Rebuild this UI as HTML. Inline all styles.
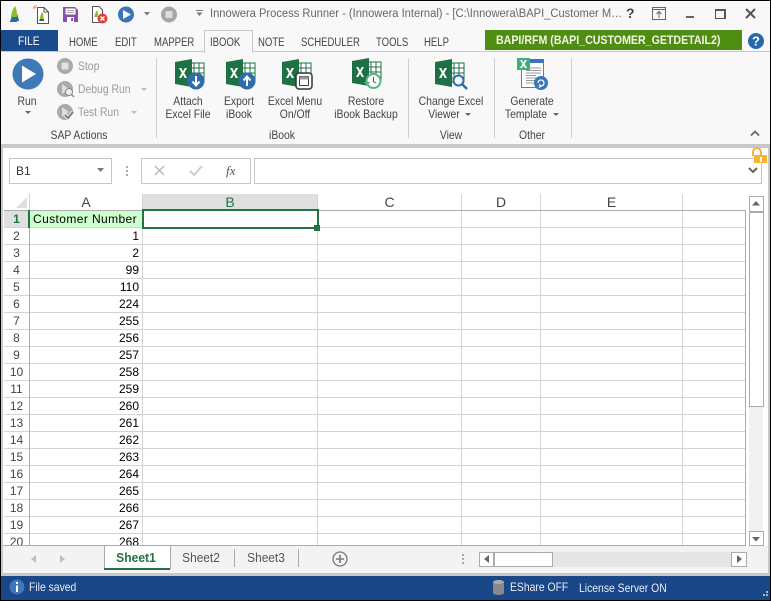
<!DOCTYPE html>
<html><head><meta charset="utf-8"><style>
html,body{margin:0;padding:0;background:#fff}
#p{position:relative;width:771px;height:601px;overflow:hidden;background:#f8f8f8;font-family:"Liberation Sans",sans-serif;font-size:12px;color:#444}
#p div,#p svg{position:absolute}
.t{white-space:nowrap;line-height:14px}
.n{transform:scaleX(.865);transform-origin:0 50%}
.c{white-space:nowrap;line-height:14px;text-align:center;width:120px;transform:scaleX(.865)}
.tab{white-space:nowrap;line-height:14px;top:36px;color:#444;font-size:11.5px;transform:scaleX(.83);transform-origin:0 50%}
.s{width:1px;background:#d0d0d0;top:58px;height:80px}
.r{left:4px;width:25px;height:16px;text-align:center;line-height:17px;color:#444}
.v{left:30px;width:109px;height:16px;text-align:right;line-height:17px;color:#000}
.h{top:194px;height:16px;text-align:center;font-size:14px;line-height:16px;color:#444}
.g{width:1px;background:#d4d4d4}
.d{color:#999}
</style></head><body><div id="p">
<svg width="0" height="0" style="left:0;top:0"><defs>
<symbol id="xl" viewBox="0 0 30 28"><rect x="15" y="4" width="14" height="19" fill="#fff" stroke="#1e7145"/><path d="M19 4V23M24 4V23M15 9H29M15 14H29M15 19H29" stroke="#1e7145" fill="none"/><path d="M0 3L17 0V28L0 25Z" fill="#1e7145"/><path d="M4 9L6.2 9 8 12.2 9.8 9H12L9.2 14 12 19H9.8L8 15.8 6.2 19H4L6.8 14Z" fill="#fff"/></symbol>
</defs></svg>

<!-- title bar -->
<div style="left:0;top:0;width:771px;height:30px;background:#f8f8f8"></div>
<svg style="left:8px;top:4px" width="16" height="20" viewBox="0 0 16 20"><path d="M7 2C9 5 9 10 9 14L3 14C3 9 5 5 7 2Z" fill="#8dbb2c"/><path d="M9 9L11 17H8L9 12Z" fill="#2a5a9a"/><path d="M2 17L4 13 9 13 9 18 2 18Z" fill="#1f6fa8"/></svg>
<svg style="left:33px;top:4px" width="18" height="20" viewBox="0 0 18 20"><path d="M4.500 3.500H11L15.500 8V19.500H4.500Z" fill="#fff" stroke="#555"/><path d="M11 3.500V8H15.500" fill="none" stroke="#555"/><path d="M9 8C10.500 10 10.500 13 10.500 15H7C7 12 8 10 9 8Z" fill="#8dbb2c"/><path d="M6.500 15H11V17H6.500Z" fill="#2a5a9a"/><path d="M1 2L3 4M3 1V2M0 4H2" stroke="#e8833a"/></svg>
<svg style="left:62px;top:6px" width="17" height="17" viewBox="0 0 17 17"><path d="M1 1H13L16 4V16H1Z" fill="#8a4fa8"/><rect x="3.500" y="2.500" width="10" height="6" fill="#fff"/><path d="M5 4.500H12M5 6.500H12" stroke="#aaa"/><rect x="5" y="11" width="7" height="5" fill="#fff"/><rect x="9" y="12" width="2" height="3" fill="#8a4fa8"/></svg>
<svg style="left:90px;top:5px" width="18" height="19" viewBox="0 0 18 19"><path d="M2.500 1.500H9L12.500 5V17.500H2.500Z" fill="#fff" stroke="#555"/><path d="M7 5C8 7 8 10 8 12H4.500C4.500 9 6 7 7 5Z" fill="#8dbb2c"/><circle cx="12.500" cy="13.500" r="5" fill="#d8413a"/><path d="M10.500 11.500L14.500 15.500M14.500 11.500L10.500 15.500" stroke="#fff" stroke-width="1.500"/></svg>
<svg style="left:117px;top:6px" width="18" height="18" viewBox="0 0 18 18"><circle cx="9" cy="8.500" r="8" fill="#3a75b5"/><path d="M6 4L14 8.500 6 13Z" fill="#fff"/></svg>
<svg style="left:144px;top:12px" width="6" height="4"><path d="M0 0H6L3 3.500Z" fill="#777"/></svg>
<svg style="left:160px;top:6px" width="18" height="18" viewBox="0 0 18 18"><circle cx="9" cy="8.500" r="8" fill="#a6a6a6"/><rect x="5.500" y="5" width="7" height="7" rx="1" fill="#ddd"/></svg>
<svg style="left:196px;top:10px" width="7" height="7"><path d="M0.500 2.500H6.500L3.500 6Z" fill="#777"/><path d="M0 .5H7" stroke="#777"/></svg>
<div class="t" style="left:210px;top:7px;color:#666;font-size:11.5px;transform:scaleX(.97);transform-origin:0 50%">Innowera Process Runner - (Innowera Internal) - [C:\Innowera\BAPI_Customer M…</div>
<div class="t" style="left:626px;top:6px;font-size:14px;font-weight:bold;color:#444">?</div>
<svg style="left:652px;top:7px" width="15" height="14"><rect x=".5" y=".5" width="13" height="12" fill="none" stroke="#666"/><path d="M1 2.500H13M7 11V5M4.500 7L7 4.500 9.500 7" fill="none" stroke="#666"/></svg>
<div style="left:686px;top:16px;width:8px;height:2px;background:#666"></div>
<div style="left:715px;top:9px;width:8px;height:7px;border:1px solid #555;border-top-width:2px;border-right-width:2px;border-bottom-width:1px;border-left-width:1px"></div>
<svg style="left:745px;top:8px" width="12" height="12"><path d="M1 1L10 10M10 1L1 10" stroke="#555" stroke-width="2"/></svg>

<!-- tabs -->
<div style="left:1px;top:30px;width:57px;height:22px;background:#1a4b8c"></div>
<div class="t" style="left:18px;top:34px;color:#fff;transform:scaleX(.85);transform-origin:0 50%">FILE</div>
<div style="left:0;top:51px;width:771px;height:1px;background:#c8c8c8"></div>
<div style="left:204px;top:30px;width:47px;height:22px;background:#f8f8f8;border:1px solid #c8c8c8;border-bottom:none"></div>
<div class="tab" style="left:69px">HOME</div>
<div class="tab" style="left:115px">EDIT</div>
<div class="tab" style="left:154px">MAPPER</div>
<div class="tab" style="left:210px">IBOOK</div>
<div class="tab" style="left:258px">NOTE</div>
<div class="tab" style="left:301px">SCHEDULER</div>
<div class="tab" style="left:376px">TOOLS</div>
<div class="tab" style="left:424px">HELP</div>
<div style="left:485px;top:30px;width:257px;height:20px;background:#4f8e12"></div>
<div class="t" style="left:496px;top:33px;color:#f4f4e8;font-weight:bold;transform:scaleX(.885);transform-origin:0 50%">BAPI/RFM (BAPI_CUSTOMER_GETDETAIL2)</div>
<svg style="left:747px;top:32px" width="18" height="18"><circle cx="9" cy="9" r="8" fill="#2568b0"/><text x="9" y="13.500" text-anchor="middle" font-family="Liberation Sans" font-weight="bold" font-size="13" fill="#fff">?</text></svg>

<!-- ribbon -->
<svg style="left:12px;top:58px" width="32" height="32"><circle cx="16" cy="16" r="15.500" fill="#3f79b8"/><path d="M10 7.500L24 16 10 24.500Z" fill="#fff"/></svg>
<div class="c" style="left:-33px;top:94px">Run</div>
<svg style="left:25px;top:111px" width="6" height="4"><path d="M0 0H6L3 3Z" fill="#666"/></svg>
<svg style="left:57px;top:58px" width="16" height="16"><circle cx="8" cy="8" r="8" fill="#a9a9a9"/><rect x="4.500" y="4.500" width="7" height="7" rx="1" fill="#e2e2e2"/></svg>
<div class="t d n" style="left:78px;top:59px">Stop</div>
<svg style="left:57px;top:81px" width="18" height="17"><circle cx="8" cy="8" r="8" fill="#a9a9a9"/><path d="M5 3L12 8 5 13Z" fill="#ddd"/><circle cx="12" cy="11" r="3.500" fill="#eee" stroke="#888"/><path d="M14.500 13.500L17 16" stroke="#888" stroke-width="1.500"/></svg>
<div class="t d n" style="left:78px;top:82px">Debug Run</div>
<svg style="left:141px;top:88px" width="6" height="4"><path d="M0 0H6L3 3Z" fill="#bbb"/></svg>
<svg style="left:57px;top:104px" width="18" height="17"><circle cx="8" cy="8" r="8" fill="#a9a9a9"/><path d="M5 3L12 8 5 13Z" fill="#ddd"/><path d="M8 11L11 14 16 8" fill="none" stroke="#f8f8f8" stroke-width="3.500"/><path d="M8 11L11 14 16 8" fill="none" stroke="#777" stroke-width="1.800"/></svg>
<div class="t d n" style="left:78px;top:105px">Test Run</div>
<svg style="left:131px;top:111px" width="6" height="4"><path d="M0 0H6L3 3Z" fill="#bbb"/></svg>
<div class="c" style="left:19px;top:128px">SAP Actions</div>
<div class="s" style="left:156px"></div><div class="s" style="left:408px"></div><div class="s" style="left:494px"></div><div class="s" style="left:571px"></div>

<svg style="left:175px;top:59px" width="30" height="28"><use href="#xl"/></svg>
<svg style="left:187px;top:72px" width="18" height="18"><circle cx="9" cy="9" r="8.500" fill="#2e6cab"/><path d="M9 4V13M5.500 9.500L9 13.500 12.500 9.500" fill="none" stroke="#fff" stroke-width="2"/></svg>
<div class="c" style="left:128px;top:94px">Attach</div><div class="c" style="left:128px;top:107px">Excel File</div>
<svg style="left:226px;top:59px" width="30" height="28"><use href="#xl"/></svg>
<svg style="left:238px;top:72px" width="18" height="18"><circle cx="9" cy="9" r="8.500" fill="#2e6cab"/><path d="M9 14V5M5.500 8.500L9 4.500 12.500 8.500" fill="none" stroke="#fff" stroke-width="2"/></svg>
<div class="c" style="left:179px;top:94px">Export</div><div class="c" style="left:179px;top:107px">iBook</div>
<svg style="left:282px;top:59px" width="30" height="28"><use href="#xl"/></svg>
<svg style="left:295px;top:72px" width="18" height="18"><rect x="1" y="1" width="16" height="16" rx="3" fill="#fff" stroke="#333" stroke-width="1.500"/><rect x="4.500" y="4.500" width="9" height="9" fill="none" stroke="#444"/><rect x="4.500" y="4.500" width="9" height="3" fill="#999"/></svg>
<div class="c" style="left:235px;top:94px">Excel Menu</div><div class="c" style="left:235px;top:107px">On/Off</div>
<svg style="left:352px;top:58px" width="30" height="28"><use href="#xl"/></svg>
<svg style="left:364px;top:72px" width="18" height="18"><circle cx="9.500" cy="9" r="7" fill="#f8f8f8" stroke="#52b788" stroke-width="2"/><path d="M9.500 5V9.500L12 11" fill="none" stroke="#555"/><path d="M0 10H6L3 14Z" fill="#52b788"/></svg>
<div class="c" style="left:306px;top:94px">Restore</div><div class="c" style="left:306px;top:107px">iBook Backup</div>
<svg style="left:435px;top:59px" width="30" height="28"><use href="#xl"/></svg>
<svg style="left:452px;top:74px" width="16" height="16"><circle cx="6.500" cy="6.500" r="5" fill="#f8f8f8" stroke="#2e6cab" stroke-width="2"/><path d="M10 10L15 15" stroke="#2e6cab" stroke-width="2.500"/></svg>
<div class="c" style="left:391px;top:94px">Change Excel</div><div class="c" style="left:384px;top:107px">Viewer</div>
<svg style="left:465px;top:113px" width="6" height="4"><path d="M0 0H6L3 3Z" fill="#666"/></svg>
<svg style="left:516px;top:58px" width="34" height="34" viewBox="0 0 34 34"><rect x="5.500" y="1.500" width="22" height="28" fill="#fff" stroke="#777"/><rect x="14" y="1" width="14" height="4" fill="#3a75b5"/><path d="M10 10H25M10 12.500H25M10 15H25M10 17.500H20M10 20H20M10 22.500H20M10 25H20" stroke="#999"/><rect x="1" y="0" width="13" height="12" fill="#3fae7a"/><path d="M4 2H6L7.500 4.500 9 2H11L8.500 6 11 10H9L7.500 7.500 6 10H4L6.500 6Z" fill="#fff"/><circle cx="25" cy="25" r="7" fill="#3a75b5"/><path d="M22 25A3 3 0 1 1 25 28M25 28L23 26.500M25 28L23 29.500" fill="none" stroke="#fff" stroke-width="1.300"/></svg>
<div class="c" style="left:472px;top:94px">Generate</div><div class="c" style="left:466px;top:107px">Template</div>
<svg style="left:553px;top:113px" width="6" height="4"><path d="M0 0H6L3 3Z" fill="#666"/></svg>
<div class="c" style="left:222px;top:128px">iBook</div>
<div class="c" style="left:391px;top:128px">View</div>
<div class="c" style="left:472px;top:128px">Other</div>
<svg style="left:750px;top:130px" width="10" height="7"><path d="M1 5.500L5 1.500 9 5.500" fill="none" stroke="#666" stroke-width="1.800"/></svg>

<!-- content frame -->
<div style="left:0;top:144px;width:771px;height:4px;background:#c8c8c8"></div>
<div style="left:3px;top:148px;width:765px;height:425px;background:#fff"></div>
<div style="left:1px;top:148px;width:2px;height:428px;background:#c8c8c8"></div>
<div style="left:768px;top:148px;width:2px;height:428px;background:#c8c8c8"></div>

<!-- formula bar -->
<div style="left:9px;top:158px;width:101px;height:24px;border:1px solid #c6c6c6;background:#fff"></div>
<div class="t" style="left:16px;top:164px;color:#333">B1</div>
<svg style="left:97px;top:168px" width="8" height="5"><path d="M0 0H7L3.500 4Z" fill="#777"/></svg>
<div style="left:126px;top:166px;width:2px;height:2px;background:#aaa;box-shadow:0 4px 0 #aaa,0 8px 0 #aaa"></div>
<div style="left:141px;top:158px;width:108px;height:24px;border:1px solid #c6c6c6;background:#fff"></div>
<svg style="left:154px;top:165px" width="12" height="11"><path d="M1 1L10 10M10 1L1 10" stroke="#bbb" stroke-width="1.500"/></svg>
<svg style="left:189px;top:165px" width="15" height="12"><path d="M1 6L5 10 13 1" fill="none" stroke="#ccc" stroke-width="2"/></svg>
<div class="t" style="left:226px;top:164px;font-family:'Liberation Serif',serif;font-style:italic;font-size:13px;color:#555">fx</div>
<div style="left:254px;top:158px;width:506px;height:24px;border:1px solid #c6c6c6;background:#fff"></div>
<svg style="left:748px;top:167px" width="10" height="8"><path d="M1 1L5 5 9 1" fill="none" stroke="#666" stroke-width="2"/></svg>
<svg style="left:750px;top:147px" width="18" height="17"><path d="M3 9V5A4 4 0 0 1 11 5V8" fill="none" stroke="#f5b041" stroke-width="2"/><rect x="4" y="8" width="13" height="8" fill="#f9b233"/><rect x="10" y="10" width="2" height="5" fill="#fff"/></svg>

<!-- grid -->
<div style="left:0;top:0;width:746px;height:545px;overflow:hidden">
<div style="left:4px;top:211px;width:741px;height:334px;background:repeating-linear-gradient(to bottom,transparent 0,transparent 16px,#d4d4d4 16px,#d4d4d4 17px)"></div>
<div style="left:142px;top:194px;width:176px;height:16px;background:#dfdfdf"></div>
<div style="left:4px;top:211px;width:25px;height:16px;background:#dfdfdf"></div>
<div style="left:30px;top:211px;width:112px;height:16px;background:#ccffcc"></div>
<div class="g" style="left:142px;top:194px;height:351px"></div>
<div class="g" style="left:317px;top:194px;height:351px"></div>
<div class="g" style="left:461px;top:194px;height:351px"></div>
<div class="g" style="left:540px;top:194px;height:351px"></div>
<div class="g" style="left:682px;top:194px;height:351px"></div>
<div class="g" style="left:29px;top:194px;height:16px"></div>
<div style="left:29px;top:210px;width:1px;height:335px;background:#ababab"></div>
<div style="left:4px;top:210px;width:741px;height:1px;background:#ababab"></div>
<div style="left:745px;top:210px;width:1px;height:335px;background:#ababab"></div>
<svg style="left:16px;top:197px" width="11" height="11"><path d="M11 0V11H0Z" fill="#dfdfdf"/></svg>
<div class="h" style="left:30px;width:112px">A</div>
<div class="h" style="left:143px;width:174px;color:#217346">B</div>
<div class="h" style="left:318px;width:143px">C</div>
<div class="h" style="left:462px;width:78px">D</div>
<div class="h" style="left:541px;width:141px">E</div>
<div class="r" style="top:211px;color:#217346;font-weight:bold">1</div><div class="v" style="top:211px;left:33px;width:110px;text-align:left;color:#000;letter-spacing:.4px">Customer Number</div>
<div class="r" style="top:228px">2</div><div class="v" style="top:228px">1</div>
<div class="r" style="top:245px">3</div><div class="v" style="top:245px">2</div>
<div class="r" style="top:262px">4</div><div class="v" style="top:262px">99</div>
<div class="r" style="top:279px">5</div><div class="v" style="top:279px">110</div>
<div class="r" style="top:296px">6</div><div class="v" style="top:296px">224</div>
<div class="r" style="top:313px">7</div><div class="v" style="top:313px">255</div>
<div class="r" style="top:330px">8</div><div class="v" style="top:330px">256</div>
<div class="r" style="top:347px">9</div><div class="v" style="top:347px">257</div>
<div class="r" style="top:364px">10</div><div class="v" style="top:364px">258</div>
<div class="r" style="top:381px">11</div><div class="v" style="top:381px">259</div>
<div class="r" style="top:398px">12</div><div class="v" style="top:398px">260</div>
<div class="r" style="top:415px">13</div><div class="v" style="top:415px">261</div>
<div class="r" style="top:432px">14</div><div class="v" style="top:432px">262</div>
<div class="r" style="top:449px">15</div><div class="v" style="top:449px">263</div>
<div class="r" style="top:466px">16</div><div class="v" style="top:466px">264</div>
<div class="r" style="top:483px">17</div><div class="v" style="top:483px">265</div>
<div class="r" style="top:500px">18</div><div class="v" style="top:500px">266</div>
<div class="r" style="top:517px">19</div><div class="v" style="top:517px">267</div>
<div class="r" style="top:534px">20</div><div class="v" style="top:534px">268</div>
<div style="left:28px;top:210px;width:2px;height:18px;background:#217346"></div>
<div style="left:142px;top:209px;width:173px;height:16px;border:2px solid #217346"></div>
<div style="left:314px;top:225px;width:6px;height:6px;background:#217346;border:0"></div>
</div>

<!-- v scrollbar -->
<div style="left:749px;top:196px;width:14px;height:349px;background:#f0f0f0"></div>
<div style="left:749px;top:196px;width:13px;height:14px;border:1px solid #ababab;background:#fff"></div>
<svg style="left:752px;top:201px" width="8" height="5"><path d="M0 4.500H8L4 0Z" fill="#666"/></svg>
<div style="left:749px;top:212px;width:13px;height:193px;border:1px solid #ababab;background:#fff"></div>
<div style="left:749px;top:531px;width:13px;height:13px;border:1px solid #ababab;background:#fff"></div>
<svg style="left:752px;top:537px" width="8" height="5"><path d="M0 0H8L4 4.500Z" fill="#666"/></svg>

<!-- sheet tabs -->
<div style="left:3px;top:546px;width:765px;height:27px;background:#f3f3f3"></div>
<div style="left:3px;top:545px;width:743px;height:1px;background:#ababab"></div>
<div style="left:104px;top:545px;width:65px;height:23px;background:#fff;border:1px solid #ababab;border-bottom:none"></div>
<div style="left:104px;top:568px;width:66px;height:2px;background:#217346"></div>
<div class="c" style="left:76px;top:551px;color:#217346;font-weight:bold;font-size:13px;transform:scaleX(.93)">Sheet1</div>
<div class="c" style="left:141px;top:551px;color:#555;font-size:12.500px;transform:scaleX(.95)">Sheet2</div>
<div class="c" style="left:206px;top:551px;color:#555;font-size:12.500px;transform:scaleX(.95)">Sheet3</div>
<div style="left:234px;top:549px;width:1px;height:18px;background:#ababab"></div>
<div style="left:298px;top:549px;width:1px;height:18px;background:#ababab"></div>
<svg style="left:31px;top:555px" width="5" height="8"><path d="M5 0V8L0 4Z" fill="#c0c0c0"/></svg>
<svg style="left:60px;top:555px" width="5" height="8"><path d="M0 0V8L5 4Z" fill="#c0c0c0"/></svg>
<svg style="left:332px;top:551px" width="16" height="16"><circle cx="8" cy="8" r="7" fill="none" stroke="#777" stroke-width="1.300"/><path d="M8 4V12M4 8H12" stroke="#777" stroke-width="1.600"/></svg>
<div style="left:462px;top:554px;width:2px;height:2px;background:#aaa;box-shadow:0 4px 0 #aaa,0 8px 0 #aaa"></div>
<div style="left:479px;top:552px;width:267px;height:15px;background:#e6e6e6"></div>
<div style="left:479px;top:552px;width:13px;height:13px;border:1px solid #ababab;background:#fff"></div>
<svg style="left:484px;top:555px" width="5" height="8"><path d="M5 0V8L0 4Z" fill="#666"/></svg>
<div style="left:494px;top:552px;width:57px;height:13px;border:1px solid #ababab;background:#fff"></div>
<div style="left:731px;top:552px;width:14px;height:13px;border:1px solid #ababab;background:#fff"></div>
<svg style="left:737px;top:555px" width="5" height="8"><path d="M0 0V8L5 4Z" fill="#666"/></svg>

<!-- status -->
<div style="left:0;top:573px;width:771px;height:3px;background:#c8c8c8"></div>
<div style="left:1px;top:576px;width:769px;height:24px;background:#1a4788"></div>
<svg style="left:9px;top:579px" width="16" height="16"><circle cx="8" cy="8" r="7.500" fill="#3d78b8"/><rect x="7" y="3" width="2" height="2" fill="#fff"/><rect x="7" y="6.500" width="2" height="6.500" fill="#fff"/></svg>
<div class="t n" style="left:29px;top:580px;color:#e8eef6">File saved</div>
<svg style="left:493px;top:580px" width="11" height="15"><path d="M0 2V13A5.500 2 0 0 0 11 13V2Z" fill="#8a8a8a"/><ellipse cx="5.500" cy="2" rx="5.500" ry="2" fill="#aaa"/></svg>
<div class="t n" style="left:510px;top:580px;color:#e8eef6">EShare OFF</div>
<div class="t n" style="left:579px;top:581px;color:#e8eef6">License Server ON</div>
<div style="left:766px;top:591px;width:2px;height:2px;background:#9fb3cf;box-shadow:0 3px 0 #9fb3cf,-3px 3px 0 #9fb3cf"></div>

<!-- window edge -->
<div style="left:0;top:0;width:771px;height:1px;background:#000"></div>
<div style="left:0;top:0;width:1px;height:601px;background:#000"></div>
<div style="left:770px;top:0;width:1px;height:601px;background:#000"></div>
<div style="left:0;top:600px;width:771px;height:1px;background:#000"></div>
</div></body></html>
